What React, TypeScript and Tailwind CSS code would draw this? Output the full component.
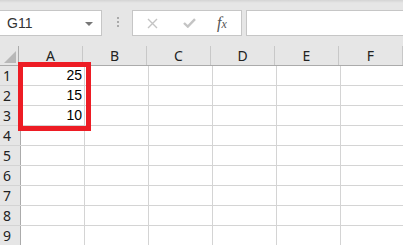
import React from 'react';

const columns = ['A', 'B', 'C', 'D', 'E', 'F'];
const values: Record<number, string> = { 1: '25', 2: '15', 3: '10' };
const rows = [1, 2, 3, 4, 5, 6, 7, 8, 9];

const App: React.FC = () => {
  return (
    <div className="w-[403px] h-[245px] overflow-hidden bg-[#e6e6e6] font-['Noto_Sans',sans-serif]">
      {/* top band */}
      <div className="h-[3px] bg-gradient-to-b from-[#d4d4d4] to-[#e6e6e6]" />

      {/* formula bar */}
      <div className="flex items-start pt-[7px] h-[43px]">
        <div className="relative flex items-center w-[102px] h-[26px] bg-white border border-l-0 border-[#c6c6c6] box-border">
          <span className="pl-[7px] text-[14px] text-[#333] font-['Liberation_Sans',sans-serif]">G11</span>
          <div className="absolute right-[8px] top-[11px] w-0 h-0 border-l-[4px] border-r-[4px] border-t-[4px] border-l-transparent border-r-transparent border-t-[#777]" />
        </div>

        <div className="flex flex-col gap-[2px] ml-[15px] mt-[7px]">
          <div className="w-[2px] h-[2px] bg-[#aaa]" />
          <div className="w-[2px] h-[2px] bg-[#aaa]" />
          <div className="w-[2px] h-[2px] bg-[#aaa]" />
        </div>

        <div className="flex items-center w-[110px] h-[26px] ml-[13px] bg-white border border-[#c6c6c6] box-border">
          <svg className="ml-[14px]" width="11" height="11" viewBox="0 0 11 11">
            <path d="M1 1 L10 10 M10 1 L1 10" stroke="#c4c4c4" strokeWidth="1.4" fill="none" />
          </svg>
          <svg className="ml-[25px]" width="13" height="10" viewBox="0 0 13 10">
            <path d="M1 5 L4.8 8.6 L12 1.2" stroke="#c4c4c4" strokeWidth="2.4" fill="none" />
          </svg>
          <span className="ml-[21px] text-[16px] italic text-[#555] font-['Liberation_Serif',serif] leading-none">
            f<span className="text-[12px]">x</span>
          </span>
        </div>

        <div className="flex-1 h-[26px] ml-[4px] bg-white border border-r-0 border-[#c6c6c6] box-border" />
      </div>

      {/* grid */}
      <div className="relative">
        <div className="flex h-[20px] border-b border-[#ababab] box-border">
          <div className="relative w-[21px] border-r border-[#ababab] box-border">
            <div className="absolute right-[2px] bottom-[2px] w-0 h-0 border-b-[12px] border-l-[12px] border-l-transparent border-b-[#b8b8b8]" />
          </div>
          {columns.map((c) => (
            <div
              key={c}
              className="flex items-center justify-center w-[64px] shrink-0 border-r border-[#c8c8c8] box-border text-[14px] text-[#222]"
            >
              {c}
            </div>
          ))}
        </div>

        {rows.map((r) => (
          <div key={r} className="flex h-[20px] bg-white border-b border-[#d4d4d4] box-border">
            <div className="flex items-center pl-[3px] w-[21px] shrink-0 bg-[#e6e6e6] border-r border-[#ababab] box-border text-[14px] text-[#222]">
              {r}
            </div>
            {columns.map((c) => (
              <div
                key={c}
                className="flex items-center justify-end pr-[2px] w-[64px] shrink-0 border-r border-[#d4d4d4] box-border text-[14px] text-black font-['Liberation_Sans',sans-serif]"
              >
                {c === 'A' ? values[r] : ''}
              </div>
            ))}
          </div>
        ))}

        <div className="absolute left-[18px] top-[16px] w-[73px] h-[69px] border-[5px] border-[#ed1c24] box-border" />
      </div>
    </div>
  );
};

export default App;
